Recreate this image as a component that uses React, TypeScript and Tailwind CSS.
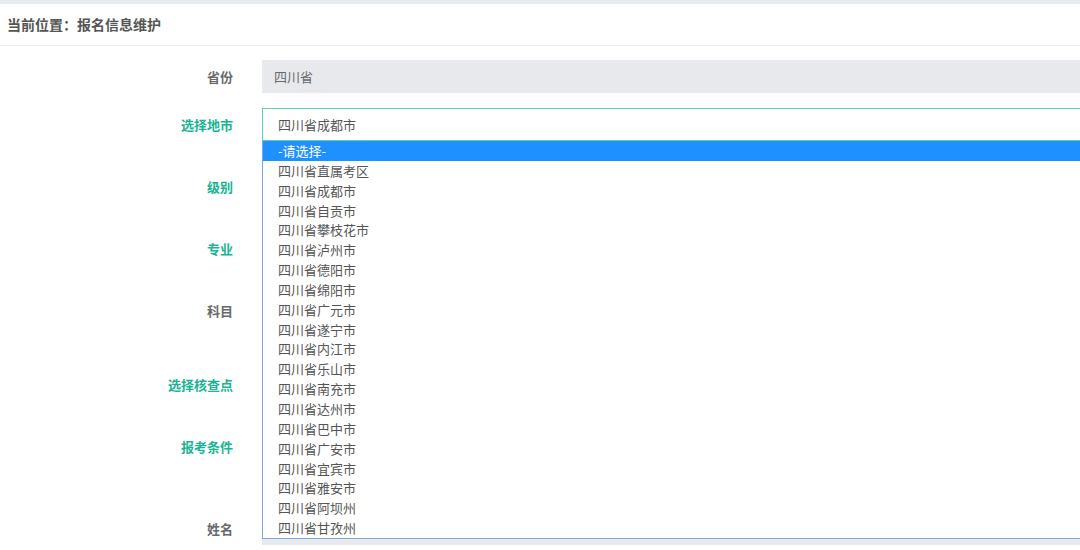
import React from 'react';

const cities = [
  '-请选择-',
  '四川省直属考区',
  '四川省成都市',
  '四川省自贡市',
  '四川省攀枝花市',
  '四川省泸州市',
  '四川省德阳市',
  '四川省绵阳市',
  '四川省广元市',
  '四川省遂宁市',
  '四川省内江市',
  '四川省乐山市',
  '四川省南充市',
  '四川省达州市',
  '四川省巴中市',
  '四川省广安市',
  '四川省宜宾市',
  '四川省雅安市',
  '四川省阿坝州',
  '四川省甘孜州',
];

const font = { fontFamily: '"Noto Sans CJK SC", "Noto Sans", sans-serif' };

interface RowProps {
  label: string;
  green?: boolean;
  className?: string;
  children?: React.ReactNode;
}

const Row = ({ label, green, className, children }: RowProps) => {
  return (
    <div className={`flex items-center h-[33px] ${className ?? ''}`}>
      <label
        className={`w-[233px] shrink-0 text-right text-[13px] font-bold ${
          green ? 'text-[#1ab394]' : 'text-[#676a6c]'
        }`}
      >
        {label}
      </label>
      <div className="ml-[29px] flex-1 h-full relative">{children}</div>
    </div>
  );
};

export default function App() {
  return (
    <div className="w-[1080px] h-[550px] overflow-hidden bg-white" style={font}>
      <div className="h-[4px] bg-[#e7eaec]" />
      <div className="h-[42px] border-b border-[#ececec] flex items-center px-[7px]">
        <span className="text-[14px] font-bold text-[#555]">当前位置：报名信息维护</span>
      </div>

      <div className="w-[1110px]">
        <Row label="省份" className="mt-[14px]">
          <div className="h-full bg-[#e7e9ec] flex items-center pl-[12px] text-[13px] text-[#676a6c]">
            四川省
          </div>
        </Row>

        <Row label="选择地市" green className="mt-[15px] relative z-10">
          <div className="h-full border border-[#5fd0b3] bg-white flex items-center pl-[15px] text-[13px] text-[#555]">
            四川省成都市
          </div>
          <ul className="absolute top-full left-0 right-0 bg-white border border-t-0 border-[#7ea6e0] text-[13px] text-[#555]">
            {cities.map((city, i) => (
              <li
                key={city}
                className={`h-[19.85px] leading-[19.85px] pl-[15px] ${
                  i === 0 ? 'bg-[#1e90ff] text-white' : ''
                }`}
              >
                {city}
              </li>
            ))}
          </ul>
        </Row>

        <Row label="级别" green className="mt-[29px]">
          <div className="h-full bg-[#e7e9ec]" />
        </Row>
        <Row label="专业" green className="mt-[29px]">
          <div className="h-full bg-[#e7e9ec]" />
        </Row>
        <Row label="科目" className="mt-[29px]">
          <div className="h-full bg-[#e7e9ec]" />
        </Row>
        <Row label="选择核查点" green className="mt-[41px]">
          <div className="h-full bg-[#e7e9ec]" />
        </Row>
        <Row label="报考条件" green className="mt-[29px]">
          <div className="h-full bg-[#e7e9ec]" />
        </Row>
        <Row label="姓名" className="mt-[49px]">
          <div className="h-full bg-[#e7e9ec]" />
        </Row>
      </div>
    </div>
  );
}
